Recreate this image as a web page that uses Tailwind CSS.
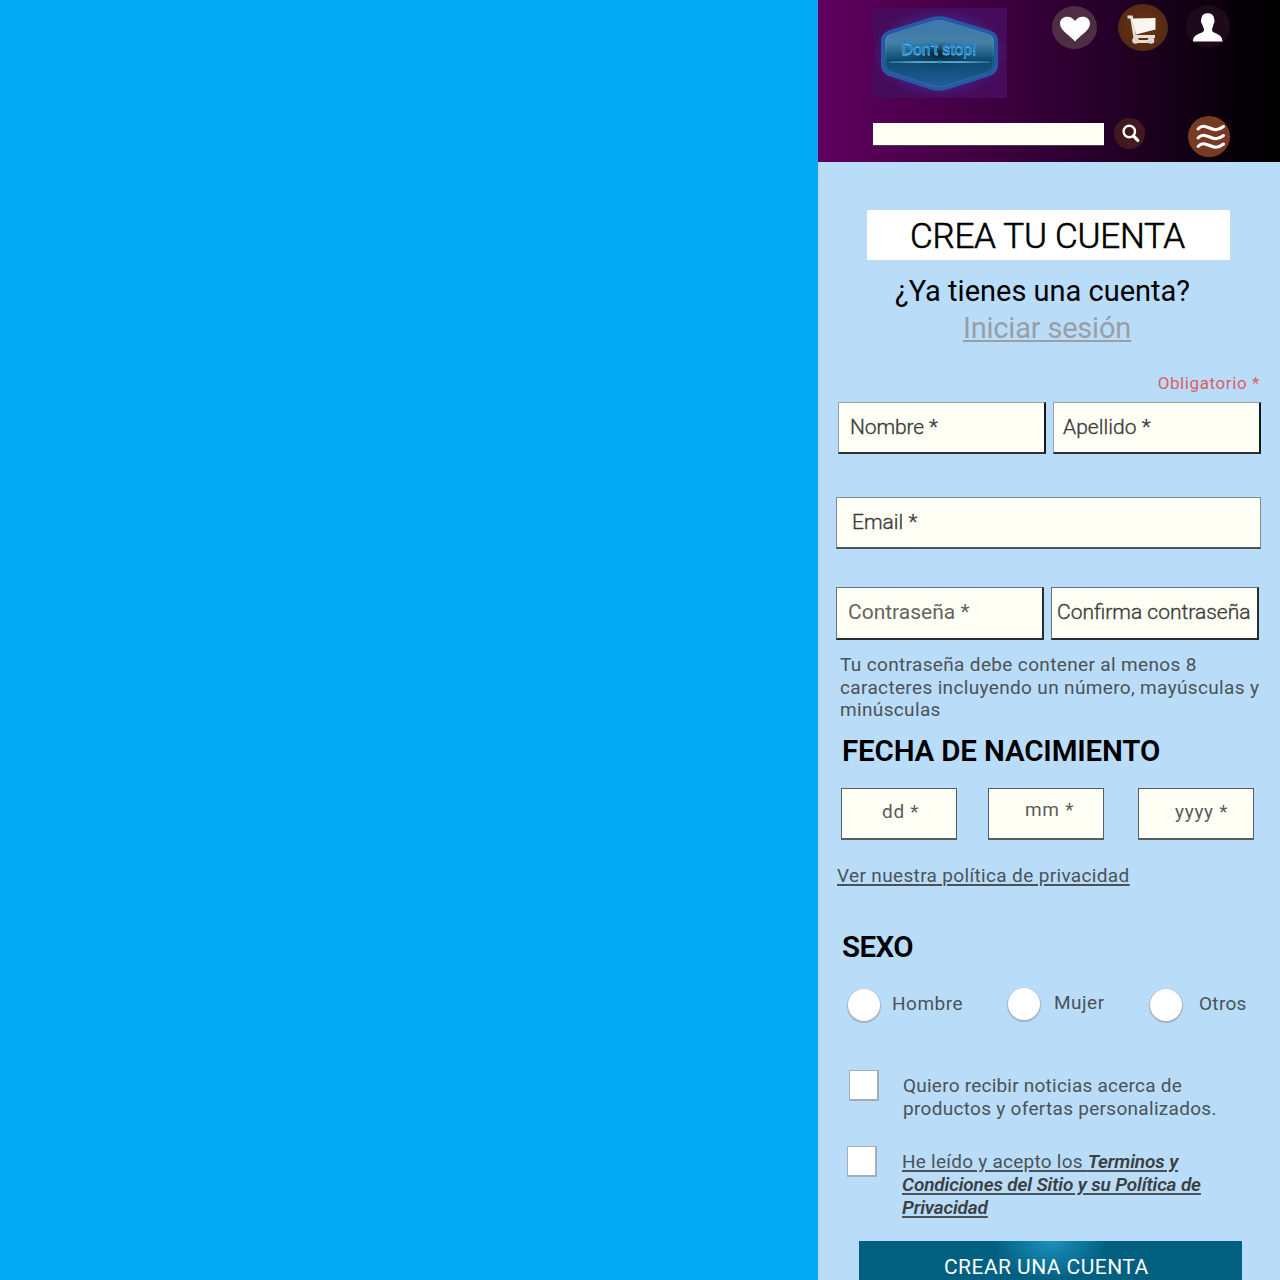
<!DOCTYPE html>
<html lang="es"><head><meta charset="utf-8"><title>Crea tu cuenta</title>
<script src="https://cdn.jsdelivr.net/npm/@tailwindcss/browser@4"></script></head>
<body class="bg-[#03a9f4] font-['Roboto',sans-serif]">
<div class="flex h-[1280px] w-[1280px] justify-end overflow-hidden">
<main class="flex w-[462px] flex-col overflow-hidden bg-[#b9ddf9] text-[#4b5257]">
  <header class="h-[162px] shrink-0 bg-[linear-gradient(90deg,#60005f_0%,#320035_50%,#000_98%)]">
    <div class="flex h-[98px] pl-[55px]">
      <svg class="mt-2 h-[90px] w-[134px]" viewBox="0 0 134 90">
        <defs>
          <radialGradient id="glow"><stop offset=".5" stop-color="#3a3090"/><stop offset="1" stop-color="#470b5c"/></radialGradient>
          <linearGradient id="badge" x2="0" y2="1"><stop stop-color="#3c78ae"/><stop offset=".35" stop-color="#4480a4"/><stop offset=".6" stop-color="#0b4a70"/><stop offset="1" stop-color="#235f9c"/></linearGradient>
          <radialGradient id="shade"><stop stop-color="#03202c" stop-opacity=".9"/><stop offset="1" stop-color="#03304c" stop-opacity="0"/></radialGradient>
          <linearGradient id="line"><stop stop-color="#8cd8ff" stop-opacity=".3"/><stop offset=".3" stop-color="#86d0f5"/><stop offset=".7" stop-color="#86d0f5"/><stop offset="1" stop-color="#8cd8ff" stop-opacity=".3"/></linearGradient>
        </defs>
        <rect width="134" height="90" fill="url(#glow)"/>
        <path d="M58 11.500Q66 9 74 11.500L117 24.500Q123 27 123 33V57Q123 63 117 66L74 79.500Q66 82 58 79.500L16 66Q10 63 10 57V33Q10 27 16 24.500Z" fill="url(#badge)" stroke="#2857a3" stroke-width="4"/>
        <path d="M58 13.500Q66 11 74 13.500L115 26Q120 28 120 34V57Q120 62 115 64L74 77.500Q66 80 58 77.500L18 64Q13 62 13 57V34Q13 28 18 26Z" fill="none" stroke="#6eabd0" stroke-opacity=".3" stroke-width=".8"/>
        <ellipse cx="66" cy="46" rx="36" ry="13" fill="url(#shade)"/>
        <text x="28.500" y="46" textLength="75" lengthAdjust="spacingAndGlyphs" font-family="Liberation Sans" font-size="17" fill="#2b93d8" stroke="#1c7fc2" stroke-width=".8" class="drop-shadow-[0_1px_0_#7fc8ee]">Don't stop!</text>
        <rect x="16" y="53.400" width="101" height="1.300" fill="url(#line)"/><circle cx="66.500" cy="54" r="1.800" fill="#2186bd"/>
      </svg>
      <svg class="mt-1.5 ml-[45px] h-[43px] w-[45px]" viewBox="0 0 45 43"><ellipse cx="22.500" cy="21.500" rx="22.500" ry="21.500" fill="#4f2d42"/><path d="M23 35.500C19 30 8 25 8 17.500C8 10 18.500 8 23 15C27.500 8 38 10 38 17.500C38 25 27 30 23 35.500Z" fill="#fff"/></svg>
      <svg class="mt-1 ml-[21px] h-[47px] w-[50px]" viewBox="0 0 50 47"><defs><radialGradient id="cart"><stop stop-color="#713409"/><stop offset="1" stop-color="#532a18"/></radialGradient></defs><ellipse cx="25" cy="23.500" rx="25" ry="23.500" fill="url(#cart)"/><path d="M9.500 13H13.500L17.500 37.500H36M18 32.500H37" fill="none" stroke="#e6dfd9" stroke-width="2.800"/><path d="M14 14.500L37.500 14V25.500L18 30.500Z" fill="#f8f5f2"/><circle cx="17.500" cy="36.500" r="3.300" fill="#ddd6d0"/><circle cx="33" cy="36.500" r="3.300" fill="#ddd6d0"/></svg>
      <svg class="mt-[5px] ml-[18px] h-[43px] w-[44px]" viewBox="0 0 44 43"><ellipse cx="22" cy="21.500" rx="22" ry="21.500" fill="#1f0a1b"/><path d="M15.500 13.500C15.500 6.500 28 6.500 28 13.500C29 15 28.500 18 27.500 19C27 22 26 23 26 25C26 29 36.500 27.500 36.500 36.500H7C7 27.500 18 29 18 25C18 23 17 22 16 19C15 18 14.500 15 15.500 13.500Z" fill="#fff"/></svg>
    </div>
    <div class="flex pt-[18px] pl-[55px]">
      <input aria-label="Buscar" class="mt-[7px] h-[23px] w-[231px] border-b border-[#44443e] bg-[#fffff5]">
      <svg class="mt-0.5 ml-2.5 h-[31px] w-[31px]" viewBox="0 0 31 31"><circle cx="15.500" cy="15.500" r="15.500" fill="#42191f"/><circle cx="15.300" cy="13.500" r="5.700" fill="none" stroke="#fff" stroke-width="2.400"/><path d="M19.500 18L23.800 22.300" stroke="#fff" stroke-width="3.200" stroke-linecap="round"/></svg>
      <svg class="ml-[43px] h-[41px] w-[42px]" viewBox="0 0 42 41"><ellipse cx="21" cy="20.500" rx="21" ry="20.500" fill="#773a25"/><path d="M10 13C18 4 24 20 35.500 10.500M10 22C18 13 24 29 35.500 19.500M10 30.500C18 21.500 24 37.500 35.500 28" fill="none" stroke="#fff" stroke-width="3" stroke-linecap="round"/></svg>
    </div>
  </header>

  <h1 class="mt-12 ml-[49px] h-[50px] w-[363px] shrink-0 bg-white pl-[43px] text-[35px] leading-[53px] font-light tracking-[-0.250px] whitespace-nowrap text-black [-webkit-text-stroke:0.600px]">CREA TU CUENTA</h1>
  <p class="mt-3 ml-[77px] h-[37px] shrink-0 text-[29px] leading-[38px] whitespace-nowrap text-black">¿Ya tienes una cuenta?</p>
  <a class="ml-[145px] h-16 shrink-0 text-[29px] leading-[38px] tracking-[-0.200px] whitespace-nowrap text-[#999fa3] underline decoration-2 underline-offset-2">Iniciar sesión</a>
  <p class="mr-5 h-[29px] shrink-0 text-right text-[17px] leading-5 tracking-[0.600px] whitespace-nowrap text-[#dd5e67]">Obligatorio *</p>

  <div class="ml-5 flex h-[52px] shrink-0 gap-[7px] text-[21px] leading-[48px] font-light text-[#3b3b3b] [-webkit-text-stroke:0.350px]">
    <label class="w-[208px] border border-r-2 border-b-2 border-t-[#98a2a5] border-l-[#98a2a5] border-r-[#151b1c] border-b-[#2b3133] bg-[#fffff5] pl-[11px] tracking-[-0.100px]">Nombre *</label>
    <label class="w-[208px] border border-r-2 border-b-2 border-t-[#98a2a5] border-l-[#98a2a5] border-r-[#151b1c] border-b-[#2b3133] bg-[#fffff5] pl-[9px] tracking-[0.050px]">Apellido *</label>
  </div>
  <label class="mt-[43px] ml-[18px] h-[52px] w-[425px] shrink-0 border border-b-2 border-[#7f8c92] border-b-[#4b5458] bg-[#fffff5] pl-[15px] text-[21px] leading-[48px] font-light text-[#3b3b3b] [-webkit-text-stroke:0.350px]">Email *</label>
  <div class="mt-[38px] ml-[18px] flex h-[53px] shrink-0 gap-[7px] text-[21px] leading-[49px] font-light whitespace-nowrap text-[#3b3b3b]">
    <label class="w-[208px] border border-r-2 border-b-2 border-[#66737a] border-r-[#252d30] border-b-[#252d30] bg-[#fffff5] pl-[11px] font-normal text-[#646462]">Contraseña *</label>
    <label class="w-[208px] border border-r-2 border-b-2 border-[#66737a] border-r-[#252d30] border-b-[#252d30] bg-[#fffff5] pl-[5px] [-webkit-text-stroke:0.350px]">Confirma contraseña</label>
  </div>
  <p class="mt-3.5 ml-[22px] h-20 shrink-0 text-[19px] leading-[22.700px] tracking-[0.350px] whitespace-nowrap">Tu contraseña debe contener al menos 8<br>caracteres incluyendo un número, mayúsculas y<br>minúsculas</p>
  <h2 class="ml-6 h-[54px] shrink-0 text-[29.500px] leading-[34px] font-semibold tracking-[-0.170px] whitespace-nowrap text-black">FECHA DE NACIMIENTO</h2>
  <div class="ml-[23px] flex h-[52px] shrink-0 text-[19px] leading-[46px] tracking-[0.700px] text-[#5c5c5a]">
    <label class="w-[116px] border border-b-2 border-[#545e63] bg-[#fffff5] pl-10">dd *</label>
    <label class="ml-[31px] w-[116px] border border-b-2 border-[#545e63] bg-[#fffff5] pl-9 leading-[42px]">mm *</label>
    <label class="ml-[34px] w-[116px] border border-b-2 border-[#545e63] bg-[#fffff5] pl-9">yyyy *</label>
  </div>
  <a class="mt-6 ml-[19px] h-[66px] shrink-0 text-[19px] leading-6 tracking-[0.350px] whitespace-nowrap underline decoration-[1.500px] underline-offset-2">Ver nuestra política de privacidad</a>
  <h2 class="ml-6 h-[58px] shrink-0 text-[29.500px] leading-[34px] font-semibold tracking-[-0.600px] text-black">SEXO</h2>
  <div class="ml-[30px] flex h-[82px] shrink-0 items-start text-[19px] leading-8 tracking-[0.500px]">
    <i class="mt-[1px] size-8 rounded-full bg-white shadow-[0_1px_1px_1px_#a7b0b8]"></i><span class="ml-3 w-[116px]">Hombre</span>
    <i class="size-8 rounded-full bg-white shadow-[0_1px_1px_1px_#a7b0b8]"></i><span class="ml-[14px] w-[96px] leading-[29px]">Mujer</span>
    <i class="mt-[1px] size-8 rounded-full bg-white shadow-[0_1px_1px_1px_#a7b0b8]"></i><span class="ml-[17px] tracking-[0.300px]">Otros</span>
  </div>
  <div class="ml-[31px] flex h-[76px] shrink-0 text-[19px] leading-[23px] whitespace-nowrap">
    <i class="h-[31px] w-[30px] border border-r-2 border-b-2 border-[#a5aeb5] bg-white"></i><p class="mt-1 ml-6 tracking-[0.230px]">Quiero recibir noticias acerca de<br><span class="tracking-[0.300px]">productos y ofertas personalizados.</span></p>
  </div>
  <div class="ml-[29px] flex h-[95px] shrink-0 text-[19px] leading-[22.800px] whitespace-nowrap">
    <i class="h-[31px] w-[30px] border border-r-2 border-b-2 border-[#a5aeb5] bg-white"></i><p class="mt-[5px] ml-[25px] tracking-[0.250px] underline decoration-[1.500px] underline-offset-2">He leído y acepto los <b class="font-semibold tracking-[-0.150px] text-[#3b3f42] italic">Terminos y<br>Condiciones del Sitio y su Política de<br>Privacidad</b></p>
  </div>
  <button class="ml-[41px] h-[60px] w-[383px] shrink-0 bg-[#015f80] bg-[radial-gradient(ellipse_58px_40px_at_50%_0,#1c91bc,#015f80)] pb-[9px] pl-[85px] text-left text-[21px] leading-7 tracking-[0.450px] whitespace-nowrap text-white">CREAR UNA CUENTA</button>
</main></div>
</body></html>
